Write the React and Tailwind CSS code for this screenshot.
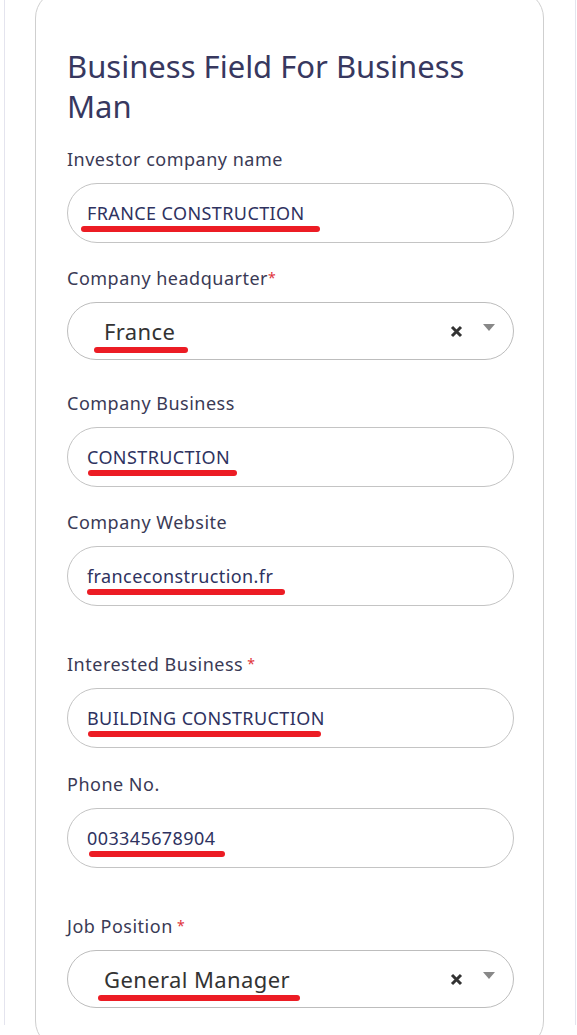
import React from "react";

function Mark({ children, l, w, b }) {
  return (
    <span className="relative inline-block">
      {children}
      <span
        className="absolute h-[6px] rounded-full bg-[#ec1c24]"
        style={{ left: l, width: w, bottom: b }}
      />
    </span>
  );
}

function Label({ text, req, star }) {
  return (
    <div className="h-[24px] text-[18px] leading-[24px] tracking-[0.5px] text-[#3a3a55]">
      {text}
      {req && <span className="text-[#e0333a] text-[14px] align-top">{star ? " *" : "*"}</span>}
    </div>
  );
}

function Input({ children }) {
  return (
    <div className="mt-[12px] h-[60px] rounded-full border border-[#c4c4c4] flex items-center pl-[19px] text-[18px] tracking-[0.4px] text-[#2e3260]">
      {children}
    </div>
  );
}

function Select({ children }) {
  return (
    <div className="mt-[12px] h-[58px] rounded-full border border-[#bdbdbd] flex items-center pl-[36px] pr-[18px] text-[22px] tracking-[0.4px] text-[#333333]">
      <div className="flex-1">{children}</div>
      <svg width="13" height="13" viewBox="0 0 13 13" className="mr-[20px]">
        <path d="M2 2 L11 11 M11 2 L2 11" stroke="#333" strokeWidth="3" strokeLinecap="butt" />
      </svg>
      <svg width="12" height="8" viewBox="0 0 12 8" className="mb-[6px]">
        <path d="M0 0 L12 0 L6 7 Z" fill="#888" />
      </svg>
    </div>
  );
}

export default function App() {
  return (
    <div className="w-[577px] h-[1035px] overflow-hidden bg-white" style={{ fontFamily: '"Noto Sans", "Open Sans", sans-serif' }}>
      <div className="ml-[4px] mr-[1px] h-full border-x border-[#e4e4ee] pl-[30px] pr-[31px]">
        <div className="-mt-[10px] rounded-[28px] border border-[#cfcfcf] pl-[31px] pr-[29px] pt-[55px] pb-[40px]">
          <h1 className="text-[31px] leading-[40px] text-[#37385f] font-normal">
            Business Field For Business Man
          </h1>

          <div className="mt-[21px]">
            <Label text="Investor company name" />
            <Input>
              <Mark l="-6px" w="239px" b="-5px">FRANCE CONSTRUCTION</Mark>
            </Input>
          </div>

          <div className="mt-[23px]">
            <Label text="Company headquarter" req />
            <Select>
              <Mark l="-10px" w="94px" b="-5px">France</Mark>
            </Select>
          </div>

          <div className="mt-[31px]">
            <Label text="Company Business" />
            <Input>
              <Mark l="1px" w="149px" b="-5px">CONSTRUCTION</Mark>
            </Input>
          </div>

          <div className="mt-[23px]">
            <Label text="Company Website" />
            <Input>
              <Mark l="0px" w="198px" b="-5px">franceconstruction.fr</Mark>
            </Input>
          </div>

          <div className="mt-[46px]">
            <Label text="Interested Business" req star />
            <Input>
              <Mark l="1px" w="233px" b="-5px">BUILDING CONSTRUCTION</Mark>
            </Input>
          </div>

          <div className="mt-[24px]">
            <Label text="Phone No." />
            <Input>
              <Mark l="2px" w="136px" b="-5px">003345678904</Mark>
            </Input>
          </div>

          <div className="mt-[46px]">
            <Label text="Job Position" req star />
            <Select>
              <Mark l="-6px" w="202px" b="-5px">General Manager</Mark>
            </Select>
          </div>
        </div>
      </div>
    </div>
  );
}
